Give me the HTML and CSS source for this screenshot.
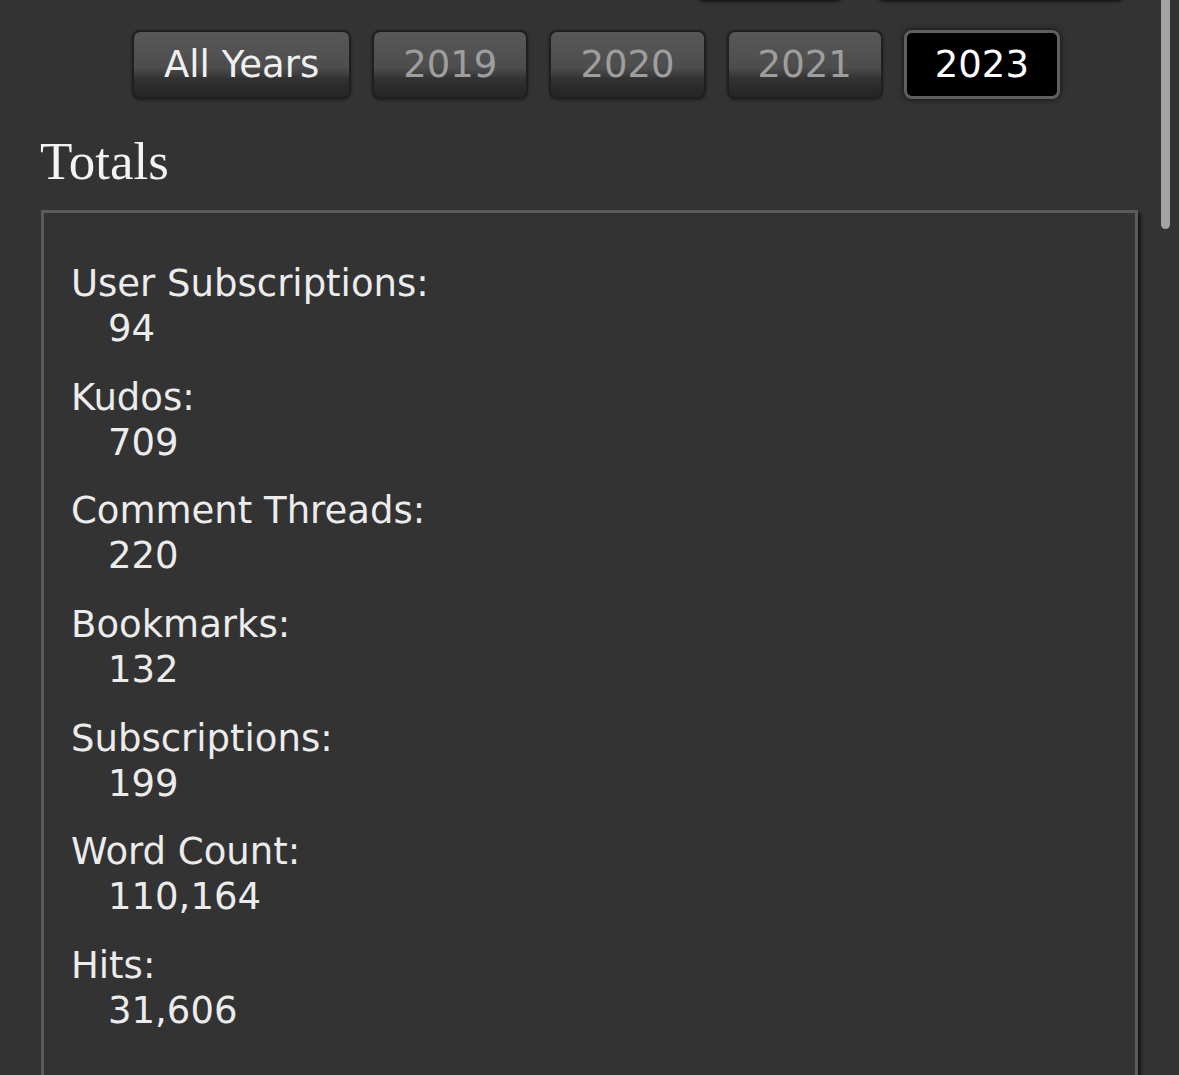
FILE: index.html
```html
<!DOCTYPE html>
<html lang="en">
<head>
<meta charset="utf-8">
<title>Stats</title>
<link rel="stylesheet" href="styles.css">
</head>
<body>
<div class="page">
  <div class="prev-row">
    <span class="prev-btn prev-a"></span>
    <span class="prev-btn prev-b"></span>
  </div>
  <ul class="years">
    <li><a class="year-btn all">All Years</a></li>
    <li><a class="year-btn">2019</a></li>
    <li><a class="year-btn">2020</a></li>
    <li><a class="year-btn">2021</a></li>
    <li><span class="year-btn current">2023</span></li>
  </ul>
  <h3 class="heading">Totals</h3>
  <div class="totals">
    <dl class="stats">
      <dt>User Subscriptions:</dt>
      <dd>94</dd>
      <dt>Kudos:</dt>
      <dd>709</dd>
      <dt>Comment Threads:</dt>
      <dd>220</dd>
      <dt>Bookmarks:</dt>
      <dd>132</dd>
      <dt>Subscriptions:</dt>
      <dd>199</dd>
      <dt>Word Count:</dt>
      <dd>110,164</dd>
      <dt>Hits:</dt>
      <dd>31,606</dd>
    </dl>
  </div>
</div>
<div class="scrollbar"></div>
</body>
</html>
```

FILE: styles.css
```css
html, body {
  margin: 0;
  padding: 0;
  background: #333333;
  height: 1075px;
  overflow: hidden;
}

body {
  font-family: "DejaVu Sans", Verdana, sans-serif;
  color: #ececec;
}

.page {
  padding: 0 41px;
}

.prev-row {
  display: flex;
  gap: 34px;
  padding-left: 656px;
  margin-top: -40px;
  height: 40px;
}

.prev-btn {
  display: block;
  height: 38px;
  border-bottom: 2px solid #6a6a6a;
  border-radius: 0 0 8px 8px;
  background: #2a2a2a;
  box-shadow: 0 2px 3px rgba(0, 0, 0, 0.6);
}

.prev-a { width: 146px; }
.prev-b { width: 248px; }

.years {
  list-style: none;
  margin: 30px 0 0;
  padding: 0 0 0 91px;
  display: flex;
  gap: 21px;
}

.years li {
  display: block;
}

.year-btn {
  display: block;
  font-size: 37px;
  line-height: 45px;
  padding: 10px 29px;
  border: 2px solid #1f1f1f;
  border-radius: 8px;
  color: #9e9e9e;
  background: linear-gradient(to bottom, #585858 0%, #4d4d4d 55%, #323232 72%, #2a2a2a 85%, #262626 100%);
  box-shadow: 0 1px 3px rgba(0, 0, 0, 0.45);
}

.year-btn.all {
  color: #f0f0f0;
  padding: 10px 30px;
}

.year-btn.current {
  color: #ffffff;
  background: #000000;
  border: 3px solid #5f5f5f;
  padding: 9px 28px;
  box-shadow: 0 0 6px rgba(0, 0, 0, 0.7);
}

.heading {
  font-family: "Liberation Serif", "Times New Roman", serif;
  font-weight: normal;
  font-size: 53px;
  line-height: 56px;
  color: #f4f4f4;
  margin: 34px 0 21px -1px;
}

.totals {
  border: 3px solid #5b5b5b;
  box-shadow: 3px 3px 3px rgba(0, 0, 0, 0.55);
  padding: 48px 27px;
  min-height: 900px;
}

.stats {
  margin: 0;
  font-size: 37px;
  line-height: 45px;
}

.stats dt {
  margin: 0;
}

.stats dd {
  margin: 0 0 23.7px 37px;
}

.scrollbar {
  position: fixed;
  top: 0;
  right: 9px;
  width: 9px;
  height: 229px;
  background: #a3a3a3;
  border-radius: 0 0 5px 5px;
}
```
